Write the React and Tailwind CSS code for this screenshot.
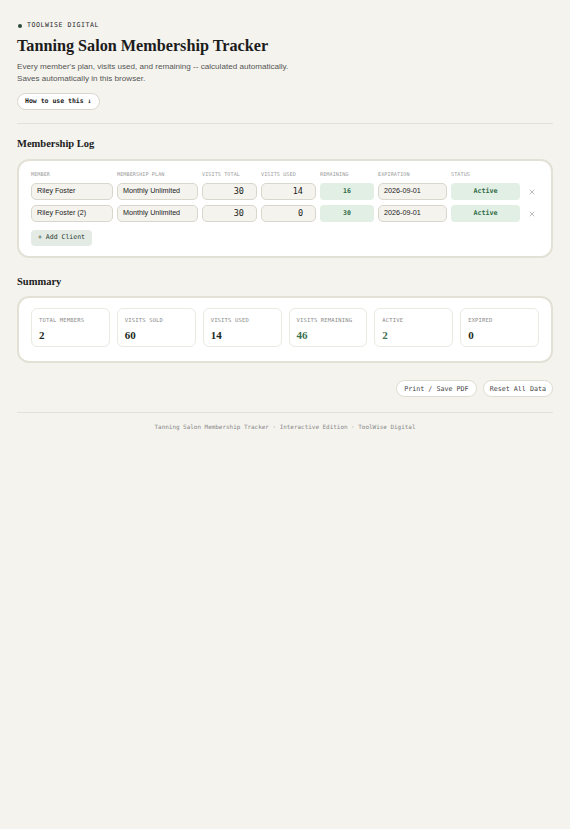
import { X } from 'lucide-react'

const serif = "font-['Liberation_Serif',serif]"
const mono = "font-['DejaVu_Sans_Mono',monospace]"
const sans = "font-['Liberation_Sans',Arial,sans-serif]"

const rows = [
  { name: 'Riley Foster', plan: 'Monthly Unlimited', total: 30, used: 14, exp: '2026-09-01' },
  { name: 'Riley Foster (2)', plan: 'Monthly Unlimited', total: 30, used: 0, exp: '2026-09-01' },
]

const stats = [
  { label: 'TOTAL MEMBERS', value: '2' },
  { label: 'VISITS SOLD', value: '60' },
  { label: 'VISITS USED', value: '14' },
  { label: 'VISITS REMAINING', value: '46', green: true },
  { label: 'ACTIVE', value: '2', green: true },
  { label: 'EXPIRED', value: '0' },
]

const cols = 'grid grid-cols-[82px_81px_55px_55px_54px_69px_69px_1fr] gap-x-[4px]'
const field = 'h-[17px] rounded-[5px] border border-[#d9d6cb] bg-[#f4f3ee] flex items-center text-[#1c1c1c]'

function App() {
  return (
    <div className={`min-h-screen bg-[#f4f3ee] px-[17px] pt-[21px] pb-10 text-[#1c1c1c] ${sans}`}>
      <header>
        <div className={`flex items-center gap-[5px] h-[9px] text-[6.6px] tracking-[0.08em] text-[#2b2b2b] ${mono}`}>
          <span className="w-[4px] h-[4px] rounded-full bg-[#2c4a38] ml-[1px]" />
          TOOLWISE DIGITAL
        </div>
        <h1 className={`mt-[6px] text-[16.2px] leading-[20px] font-bold ${serif}`}>Tanning Salon Membership Tracker</h1>
        <p className="mt-[5px] text-[8.1px] leading-[12px] text-[#555]">
          Every member's plan, visits used, and remaining -- calculated automatically.
          <br />
          Saves automatically in this browser.
        </p>
        <button className={`mt-[8px] h-[17px] px-[7px] rounded-full border border-[#d9d6cb] bg-white text-[6.5px] font-bold ${mono}`}>
          How to use this ↓
        </button>
      </header>

      <div className="mt-[13px] border-t border-[#e2e0d8]" />

      <h2 className={`mt-[12px] text-[10.5px] leading-[15px] font-bold ${serif}`}>Membership Log</h2>
      <section className="mt-[8px] rounded-[12px] border-2 border-[#e3e1d6] bg-white px-[12px] pt-[9px] pb-[10px]">
        <div className={`${cols} mb-[5px]`}>
          {['MEMBER', 'MEMBERSHIP PLAN', 'VISITS TOTAL', 'VISITS USED', 'REMAINING', 'EXPIRATION', 'STATUS', ''].map((h) => (
            <div key={h} className={`text-[5.1px] text-[#9a9a9a] tracking-[0.02em] leading-[8px] ${mono}`}>{h}</div>
          ))}
        </div>
        <div className={`${cols} gap-y-[5px] items-center`}>
          {rows.map((r) => (
            <Row key={r.name} r={r} />
          ))}
        </div>
        <button className={`mt-[8px] h-[16px] px-[7px] rounded-[4px] bg-[#e3ebe4] text-[6.5px] text-[#2a3a30] ${mono}`}>
          + Add Client
        </button>
      </section>

      <h2 className={`mt-[16px] text-[10.5px] leading-[15px] font-bold ${serif}`}>Summary</h2>
      <section className="mt-[7px] rounded-[12px] border-2 border-[#e3e1d6] bg-white px-[12px] pt-[10px] pb-[14px]">
        <div className="grid grid-cols-6 gap-[7px]">
          {stats.map((s) => (
            <div key={s.label} className="h-[39px] rounded-[6px] border border-[#ebe9e2] px-[7px] pt-[7px]">
              <div className={`text-[5.5px] text-[#8a8a8a] tracking-[0.03em] leading-[8px] ${mono}`}>{s.label}</div>
              <div className={`mt-[4px] text-[11px] leading-[14px] font-bold ${serif} ${s.green ? 'text-[#3d7251]' : 'text-[#1c2a22]'}`}>
                {s.value}
              </div>
            </div>
          ))}
        </div>
      </section>

      <div className="mt-[17px] flex justify-end gap-[6px]">
        <button className={`h-[17px] px-[7px] rounded-full border border-[#dedbd0] bg-white text-[6.7px] text-[#444] ${mono}`}>Print / Save PDF</button>
        <button className={`h-[17px] px-[6px] rounded-full border border-[#dedbd0] bg-white text-[6.7px] text-[#444] ${mono}`}>Reset All Data</button>
      </div>

      <div className="mt-[15px] border-t border-[#e2e0d8]" />
      <footer className={`mt-[10px] text-center text-[5.95px] leading-[8px] text-[#8a8a8a] ${mono}`}>
        Tanning Salon Membership Tracker · Interactive Edition · ToolWise Digital
      </footer>
    </div>
  )
}

function Row({ r }) {
  const remaining = r.total - r.used
  return (
    <>
      <div className={`${field} px-[5px] text-[7.2px]`}>{r.name}</div>
      <div className={`${field} px-[5px] text-[7.2px]`}>{r.plan}</div>
      <div className={`${field} justify-end pr-[12px] text-[8.5px] ${mono}`}>{r.total}</div>
      <div className={`${field} justify-end pr-[12px] text-[8.5px] ${mono}`}>{r.used}</div>
      <div className={`h-[17px] rounded-[4px] bg-[#e2efe5] flex items-center justify-center text-[6.5px] font-bold text-[#2f6b45] ${mono}`}>{remaining}</div>
      <div className={`${field} px-[5px] text-[7.2px]`}>{r.exp}</div>
      <div className={`h-[17px] rounded-[4px] bg-[#e2efe5] flex items-center justify-center text-[6.7px] font-bold text-[#2f6b45] ${mono}`}>Active</div>
      <div className="flex justify-center text-[#777]">
        <X size={8} strokeWidth={1.5} />
      </div>
    </>
  )
}

export default App
